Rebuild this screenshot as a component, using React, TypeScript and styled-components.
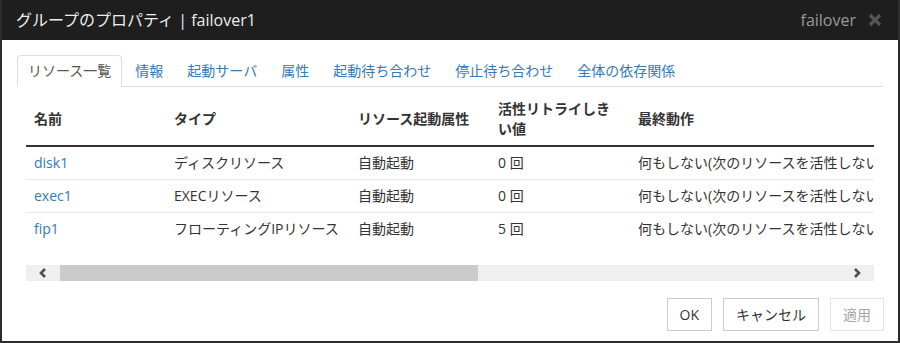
import styled, { createGlobalStyle } from 'styled-components';

const GlobalStyle = createGlobalStyle`
  html, body {
    margin: 0;
    padding: 0;
    background: #ffffff;
  }
  body {
    font-family: "Open Sans", "Noto Sans CJK JP", sans-serif;
    font-size: 14px;
    color: #333333;
  }
`

const Dialog = styled.div`
  box-sizing: border-box;
  width: 900px;
  height: 343px;
  border: 2px solid #2c2c2c;
  border-top: none;
  display: flex;
  flex-direction: column;
  background: #ffffff;
  overflow: hidden;
`

const TitleBar = styled.header`
  height: 40px;
  flex-shrink: 0;
  background: #1e1e1e;
  display: flex;
  align-items: center;
  margin: 0 -2px;
  padding: 0 18px 0 16px;
`

const Title = styled.h1`
  margin: 0;
  flex: 1;
  font-size: 16px;
  font-weight: normal;
  line-height: 20px;
  color: #eeeeee;
  white-space: nowrap;
`

const TitleSub = styled.span`
  font-size: 16px;
  line-height: 20px;
  color: #999999;
  margin-right: 12px;
`

const CloseIcon = styled.svg`
  width: 14px;
  height: 14px;
  display: block;
`

const Body = styled.main`
  flex: 1;
  padding: 15px 15px 0 15px;
  display: flex;
  flex-direction: column;
`

const Tabs = styled.ul`
  list-style: none;
  margin: 0;
  padding: 0;
  display: flex;
  border-bottom: 1px solid #dddddd;
`

const Tab = styled.li<{ active?: boolean }>`
  margin-right: 2px;
  margin-bottom: -1px;
  padding: 5px 10px;
  line-height: 20px;
  font-size: 14px;
  white-space: nowrap;
  border: 1px solid ${(p) => (p.active ? '#dddddd' : 'transparent')};
  border-bottom-color: ${(p) => (p.active ? '#ffffff' : 'transparent')};
  border-radius: 4px 4px 0 0;
  background: ${(p) => (p.active ? '#ffffff' : 'transparent')};
  color: ${(p) => (p.active ? '#555555' : '#337ab7')};
`

const TabPane = styled.section`
  padding: 6px 9px 0 9px;
`

const TableWrap = styled.div`
  width: 848px;
  overflow: hidden;
`

const Table = styled.table`
  border-collapse: collapse;
  table-layout: fixed;
  width: 980px;
`

const Th = styled.th<{ w: number }>`
  width: ${(p) => p.w}px;
  box-sizing: border-box;
  text-align: left;
  vertical-align: middle;
  padding: 6px 8px;
  line-height: 20px;
  font-size: 14px;
  font-weight: bold;
  color: #333333;
  border-bottom: 2px solid #333333;
`

const Td = styled.td`
  padding: 6px 8px;
  line-height: 20px;
  font-size: 14px;
  white-space: nowrap;
  overflow: hidden;
  color: #333333;
  border-top: 1px solid #e9e9e9;
`

const NameLink = styled.a`
  color: #337ab7;
  text-decoration: none;
`

const Scrollbar = styled.div`
  margin-top: 20px;
  height: 16px;
  width: 848px;
  display: flex;
  background: #efefef;
`

const ScrollButton = styled.div`
  width: 34px;
  flex-shrink: 0;
  display: flex;
  align-items: center;
  justify-content: center;
`

const ScrollTrack = styled.div`
  flex: 1;
  display: flex;
`

const ScrollThumb = styled.div`
  width: 418px;
  background: #cbcbcb;
`

const Footer = styled.footer`
  display: flex;
  justify-content: flex-end;
  gap: 11px;
  padding: 0 14px 10px 0;
  margin-top: auto;
`

const Button = styled.button<{ disabled?: boolean }>`
  height: 33px;
  padding: 0 12px;
  font-family: "Open Sans", "Noto Sans CJK JP", sans-serif;
  font-size: 14px;
  line-height: 20px;
  background: #ffffff;
  border: 1px solid ${(p) => (p.disabled ? '#e4e4e4' : '#cccccc')};
  color: ${(p) => (p.disabled ? '#a6a6a6' : '#333333')};
  border-radius: 0;
`

const tabs = ['リソース一覧', '情報', '起動サーバ', '属性', '起動待ち合わせ', '停止待ち合わせ', '全体の依存関係'];

const columns = [
  { label: '名前', w: 140 },
  { label: 'タイプ', w: 184 },
  { label: 'リソース起動属性', w: 140 },
  { label: '活性リトライしきい値', w: 140 },
  { label: '最終動作', w: 376 },
];

const resources = [
  { name: 'disk1', type: 'ディスクリソース', start: '自動起動', retry: '0 回', action: '何もしない(次のリソースを活性しない)' },
  { name: 'exec1', type: 'EXECリソース', start: '自動起動', retry: '0 回', action: '何もしない(次のリソースを活性しない)' },
  { name: 'fip1', type: 'フローティングIPリソース', start: '自動起動', retry: '5 回', action: '何もしない(次のリソースを活性しない)' },
];

function Chevron({ dir }: { dir: 'left' | 'right' }) {
  return (
    <svg width="10" height="10" viewBox="0 0 10 10">
      <path
        d={dir === 'left' ? 'M7 1 L3 5 L7 9' : 'M3 1 L7 5 L3 9'}
        fill="none"
        stroke="#505050"
        strokeWidth="2.6"
      />
    </svg>
  );
}

function App() {
  return (
    <>
      <GlobalStyle />
      <Dialog>
        <TitleBar>
          <Title>グループのプロパティ | failover1</Title>
          <TitleSub>failover</TitleSub>
          <CloseIcon viewBox="0 0 14 14">
            <path d="M2 2 L12 12 M12 2 L2 12" stroke="#555555" strokeWidth="3.2" />
          </CloseIcon>
        </TitleBar>

        <Body>
          <Tabs>
            {tabs.map((t, i) => (
              <Tab key={t} active={i === 0}>{t}</Tab>
            ))}
          </Tabs>

          <TabPane>
            <TableWrap>
              <Table>
                <thead>
                  <tr>
                    {columns.map((c) => (
                      <Th key={c.label} w={c.w}>{c.label}</Th>
                    ))}
                  </tr>
                </thead>
                <tbody>
                  {resources.map((r) => (
                    <tr key={r.name}>
                      <Td><NameLink>{r.name}</NameLink></Td>
                      <Td>{r.type}</Td>
                      <Td>{r.start}</Td>
                      <Td>{r.retry}</Td>
                      <Td>{r.action}</Td>
                    </tr>
                  ))}
                </tbody>
              </Table>
            </TableWrap>

            <Scrollbar>
              <ScrollButton><Chevron dir="left" /></ScrollButton>
              <ScrollTrack><ScrollThumb /></ScrollTrack>
              <ScrollButton><Chevron dir="right" /></ScrollButton>
            </Scrollbar>
          </TabPane>
        </Body>

        <Footer>
          <Button>OK</Button>
          <Button>キャンセル</Button>
          <Button disabled>適用</Button>
        </Footer>
      </Dialog>
    </>
  );
}

export default App;
